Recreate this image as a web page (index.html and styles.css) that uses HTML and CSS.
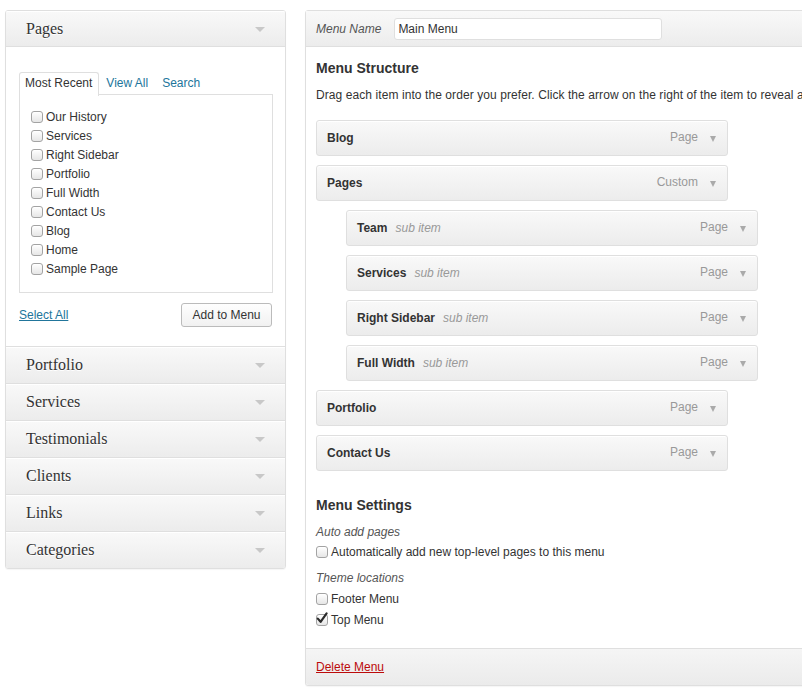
FILE: index.html
```html
<!DOCTYPE html>
<html>
<head>
<meta charset="utf-8">
<title>Menus</title>
<link rel="stylesheet" href="styles.css">
</head>
<body>
<div class="wrap">
  <div class="side">
    <div class="acc open">
      <div class="acc-head"><h3>Pages</h3><span class="tri"></span></div>
      <div class="acc-body">
        <ul class="tabs">
          <li class="active">Most Recent</li>
          <li><a href="#">View All</a></li>
          <li><a href="#">Search</a></li>
        </ul>
        <div class="tab-panel">
          <ul class="checklist">
            <li><label class="check"><span class="cb"><input type="checkbox"></span>Our History</label></li>
            <li><label class="check"><span class="cb"><input type="checkbox"></span>Services</label></li>
            <li><label class="check"><span class="cb"><input type="checkbox"></span>Right Sidebar</label></li>
            <li><label class="check"><span class="cb"><input type="checkbox"></span>Portfolio</label></li>
            <li><label class="check"><span class="cb"><input type="checkbox"></span>Full Width</label></li>
            <li><label class="check"><span class="cb"><input type="checkbox"></span>Contact Us</label></li>
            <li><label class="check"><span class="cb"><input type="checkbox"></span>Blog</label></li>
            <li><label class="check"><span class="cb"><input type="checkbox"></span>Home</label></li>
            <li><label class="check"><span class="cb"><input type="checkbox"></span>Sample Page</label></li>
          </ul>
        </div>
        <div class="actions">
          <a href="#" class="select-all">Select All</a>
          <button class="btn">Add to Menu</button>
        </div>
      </div>
    </div>
    <div class="acc"><div class="acc-head"><h3>Portfolio</h3><span class="tri"></span></div></div>
    <div class="acc"><div class="acc-head"><h3>Services</h3><span class="tri"></span></div></div>
    <div class="acc"><div class="acc-head"><h3>Testimonials</h3><span class="tri"></span></div></div>
    <div class="acc"><div class="acc-head"><h3>Clients</h3><span class="tri"></span></div></div>
    <div class="acc"><div class="acc-head"><h3>Links</h3><span class="tri"></span></div></div>
    <div class="acc"><div class="acc-head"><h3>Categories</h3><span class="tri"></span></div></div>
  </div>

  <div class="main">
    <div class="main-head">
      <label class="name-label">Menu Name</label>
      <input class="name-input" type="text" value="Main Menu">
    </div>
    <div class="main-body">
      <h3 class="sec-title">Menu Structure</h3>
      <p class="desc">Drag each item into the order you prefer. Click the arrow on the right of the item to reveal additional configuration options.</p>
      <ul class="items">
        <li class="item"><span class="item-title">Blog</span><span class="item-type">Page</span><span class="arrow"></span></li>
        <li class="item"><span class="item-title">Pages</span><span class="item-type">Custom</span><span class="arrow"></span></li>
        <li class="item sub"><span class="item-title">Team</span><span class="sub-label">sub item</span><span class="item-type">Page</span><span class="arrow"></span></li>
        <li class="item sub"><span class="item-title">Services</span><span class="sub-label">sub item</span><span class="item-type">Page</span><span class="arrow"></span></li>
        <li class="item sub"><span class="item-title">Right Sidebar</span><span class="sub-label">sub item</span><span class="item-type">Page</span><span class="arrow"></span></li>
        <li class="item sub"><span class="item-title">Full Width</span><span class="sub-label">sub item</span><span class="item-type">Page</span><span class="arrow"></span></li>
        <li class="item"><span class="item-title">Portfolio</span><span class="item-type">Page</span><span class="arrow"></span></li>
        <li class="item"><span class="item-title">Contact Us</span><span class="item-type">Page</span><span class="arrow"></span></li>
      </ul>

      <h3 class="sec-title settings">Menu Settings</h3>
      <div class="opt-label first">Auto add pages</div>
      <label class="check row row-auto"><span class="cb"><input type="checkbox"></span>Automatically add new top-level pages to this menu</label>
      <div class="opt-label">Theme locations</div>
      <label class="check row row-footer"><span class="cb"><input type="checkbox"></span>Footer Menu</label>
      <label class="check row row-top"><span class="cb"><input type="checkbox" checked><svg class="tick" width="14" height="14" viewBox="0 0 14 14"><path d="M2.8 7.6 L5.6 10.8 L11.6 2.4" fill="none" stroke="#2b2b2b" stroke-width="2.2" stroke-linecap="round" stroke-linejoin="round"/></svg></span>Top Menu</label>
    </div>
    <div class="main-foot">
      <a href="#" class="delete">Delete Menu</a>
    </div>
  </div>
</div>
</body>
</html>
```

FILE: styles.css
```css
html, body {
  margin: 0;
  padding: 0;
  overflow: hidden;
  background: #fff;
}
body {
  font-family: "Liberation Sans", Arial, sans-serif;
  font-size: 12px;
  color: #333;
  width: 802px;
  height: 696px;
}
ul { list-style: none; margin: 0; padding: 0; }
a { color: #21759b; }

.wrap {
  display: flex;
  align-items: flex-start;
  gap: 19px;
  padding: 10px 0 0 5px;
}

/* ---------- left accordion ---------- */
.side {
  flex: none;
  width: 281px;
  box-sizing: border-box;
  border: 1px solid #dfdfdf;
  border-radius: 3px;
  box-shadow: 0 1px 1px rgba(0,0,0,0.04);
  overflow: hidden;
}
.acc + .acc { border-top: 1px solid #dfdfdf; }
.acc-head {
  height: 36px;
  box-sizing: border-box;
  display: flex;
  align-items: center;
  justify-content: space-between;
  padding: 0 20px 0 20px;
  background: linear-gradient(to bottom, #f9f9f9, #ececec);
  box-shadow: inset 0 1px 0 #fff;
}
.open .acc-head {
  height: 36px;
  border-bottom: 1px solid #dfdfdf;
}
.acc-head h3 {
  margin: 0;
  font-family: "Liberation Serif", Georgia, serif;
  font-weight: normal;
  font-size: 16px;
  color: #333;
  text-shadow: 0 1px 0 #fff;
}
.tri {
  width: 0; height: 0;
  border-left: 5px solid transparent;
  border-right: 5px solid transparent;
  border-top: 5px solid #c8c8c8;
  margin-top: 1px;
}
.acc-body {
  background: #fff;
  padding: 25px 12px 19px 13px;
}
.tabs {
  display: flex;
  height: 22px;
  line-height: 21px;
}
.tabs li {
  padding: 0 6px;
  border: 1px solid transparent;
  border-bottom: none;
  height: 22px;
}
.tabs li.active {
  padding: 0 6px 0 5px;
  border-color: #dfdfdf;
  background: #fff;
  height: 23px;
  border-radius: 3px 3px 0 0;
  color: #333;
}
.tabs a { text-decoration: none; }
.tab-panel {
  border: 1px solid #dfdfdf;
  padding: 12px 0 14px 11px;
  background: #fff;
}
.checklist li {
  height: 19px;
  display: flex;
  align-items: center;
}
.check {
  display: flex;
  align-items: center;
  color: #333;
}
.cb {
  position: relative;
  display: inline-flex;
  margin-right: 3px;
}
.cb input {
  -webkit-appearance: none;
  appearance: none;
  margin: 0;
  width: 12px;
  height: 12px;
  border: 1px solid #a3a3a3;
  border-radius: 3px;
  background: linear-gradient(to bottom, #ffffff, #e6e6e6);
  box-shadow: inset 0 1px 1px rgba(255,255,255,0.9);
}
.tick {
  position: absolute;
  left: -1px;
  top: -3px;
}
.actions {
  margin-top: 10px;
  display: flex;
  align-items: center;
  justify-content: space-between;
  padding-right: 1px;
}
.btn {
  font-family: "Liberation Sans", Arial, sans-serif;
  font-size: 12px;
  color: #333;
  height: 24px;
  width: 91px;
  padding: 0;
  border: 1px solid #bbb;
  border-radius: 3px;
  background: linear-gradient(to bottom, #fefefe, #f1f1f1);
}

/* ---------- right panel ---------- */
.main {
  flex: none;
  width: 640px;
  border: 1px solid #dfdfdf;
  border-radius: 3px;
  box-shadow: 0 1px 1px rgba(0,0,0,0.04);
  background: #fff;
}
.main-head {
  height: 36px;
  box-sizing: border-box;
  border-bottom: 1px solid #dfdfdf;
  display: flex;
  align-items: center;
  gap: 13px;
  padding: 0 10px;
  background: linear-gradient(to bottom, #f9f9f9, #ececec);
}
.name-label {
  font-style: italic;
  color: #555;
}
.name-input {
  width: 268px;
  height: 22px;
  box-sizing: border-box;
  border: 1px solid #dfdfdf;
  border-radius: 3px;
  background: #fff;
  font-family: "Liberation Sans", Arial, sans-serif;
  font-size: 12px;
  color: #333;
  padding: 0 3px;
  margin: 0;
}
.main-body {
  padding: 13px 10px 18px;
}
.sec-title {
  margin: 0;
  font-size: 14px;
  line-height: 17px;
  font-weight: bold;
  color: #333;
}
.desc {
  margin: 10px 0 0;
  line-height: 16px;
  white-space: nowrap;
  letter-spacing: 0.08px;
  color: #333;
}
.items {
  margin-top: 17px;
  display: flex;
  flex-direction: column;
  gap: 9px;
}
.item {
  width: 412px;
  height: 36px;
  box-sizing: border-box;
  border: 1px solid #dfdfdf;
  border-radius: 3px;
  background: linear-gradient(to bottom, #f9f9f9, #ececec);
  box-shadow: inset 0 1px 0 #fff;
  display: flex;
  align-items: center;
  padding: 0 11px 0 10px;
}
.item.sub { margin-left: 30px; }
.item-title {
  font-weight: bold;
  color: #333;
}
.sub-label {
  margin-left: 8px;
  font-style: italic;
  color: #999;
}
.item-type {
  margin-left: auto;
  color: #999;
  margin-top: -2px;
}
.arrow {
  width: 0; height: 0;
  border-left: 3.5px solid transparent;
  border-right: 3.5px solid transparent;
  border-top: 6px solid #aaa;
  margin-left: 12px;
  margin-top: 1px;
}
.settings { margin-top: 26px; }
.opt-label {
  font-style: italic;
  color: #555;
  line-height: 16px;
  margin-top: 8px;
}
.opt-label.first { margin-top: 10px; }
.row { height: 20px; }
.row-auto { margin-top: 2px; }
.row-footer { margin-top: 3px; }
.row-top { margin-top: 1px; }
.main-foot {
  height: 37px;
  box-sizing: border-box;
  border-top: 1px solid #dfdfdf;
  display: flex;
  align-items: center;
  padding: 0 10px 1px;
  background: linear-gradient(to bottom, #f5f5f5, #ebebeb);
  border-radius: 0 0 3px 3px;
}
.delete { color: #bc0b0b; }
```
